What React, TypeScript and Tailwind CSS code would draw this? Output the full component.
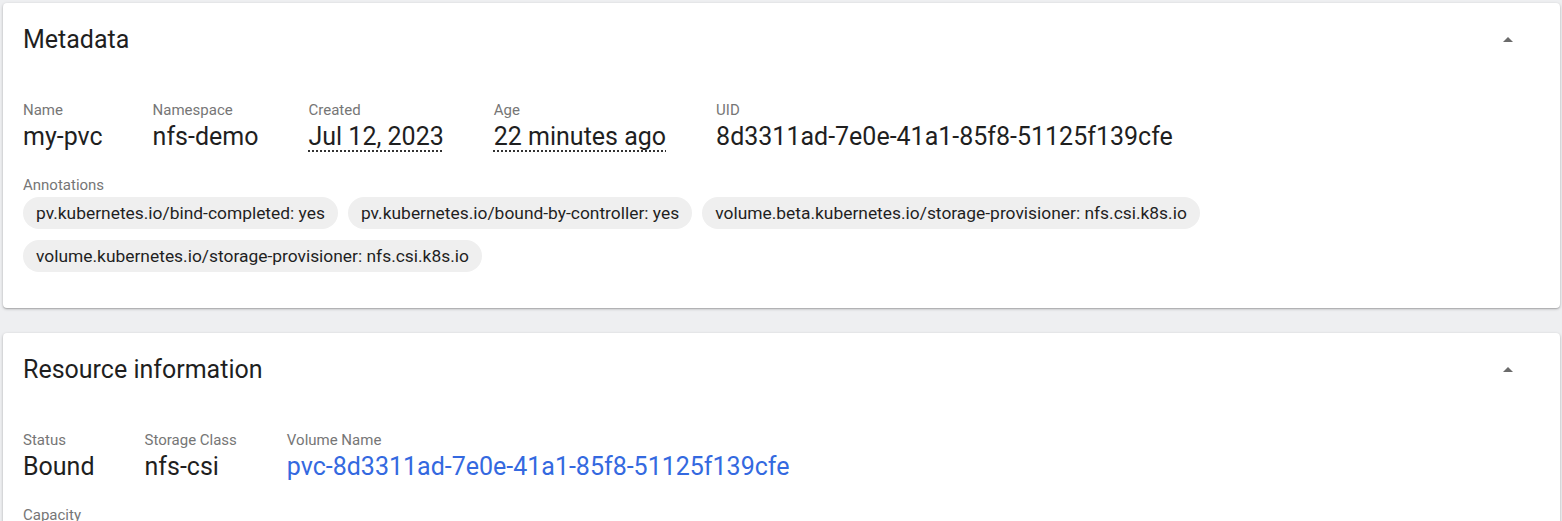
import React from "react";

function ArrowUp() {
  return (
    <svg width="24" height="24" viewBox="0 0 24 24" className="block">
      <path d="M7 14l5-5 5 5z" fill="#6b6b6b" />
    </svg>
  );
}

function Field({ label, children }: { label: string; children: React.ReactNode }) {
  return (
    <div className="flex flex-col">
      <div className="text-[15px] leading-[20px] text-[#767676]">{label}</div>
      <div className="mt-[2px] text-[25px] leading-[30px] text-[#1f1f1f]">{children}</div>
    </div>
  );
}

function Card({ title, children }: { title: string; children: React.ReactNode }) {
  return (
    <div className="rounded-[4px] bg-white shadow-[0_1px_3px_rgba(0,0,0,0.25),0_1px_1px_rgba(0,0,0,0.12)] px-5 pt-[21px]">
      <div className="flex items-center justify-between">
        <h2 className="text-[25px] leading-[32px] text-[#1f1f1f]">{title}</h2>
        <div className="mr-[20px]">
          <ArrowUp />
        </div>
      </div>
      {children}
    </div>
  );
}

function Chip({ children }: { children: React.ReactNode }) {
  return (
    <span className="inline-flex h-8 items-center rounded-full bg-[#efefef] px-[13px] text-[17.4px] text-[#1f1f1f]">
      {children}
    </span>
  );
}

function Dotted({ children }: { children: React.ReactNode }) {
  return (
    <span className="underline decoration-dotted decoration-[2px] underline-offset-[5px] decoration-[#333]">
      {children}
    </span>
  );
}

export default function App() {
  return (
    <div
      className="h-[521px] overflow-hidden bg-[#eeeff1] pl-[3px] pr-[2px] pt-[3px]"
      style={{ fontFamily: "Roboto, 'Noto Sans', sans-serif" }}
    >
      <Card title="Metadata">
        <div className="mt-[44px] flex gap-[50px]">
          <Field label="Name">my-pvc</Field>
          <Field label="Namespace">nfs-demo</Field>
          <Field label="Created">
            <Dotted>Jul 12, 2023</Dotted>
          </Field>
          <Field label="Age">
            <Dotted>22 minutes ago</Dotted>
          </Field>
          <Field label="UID">8d3311ad-7e0e-41a1-85f8-51125f139cfe</Field>
        </div>
        <div className="mt-[23px] text-[15px] leading-[20px] text-[#767676]">Annotations</div>
        <div className="mt-[2px] flex flex-wrap gap-x-[10px] gap-y-[11px] pb-[36px]">
          <Chip>pv.kubernetes.io/bind-completed: yes</Chip>
          <Chip>pv.kubernetes.io/bound-by-controller: yes</Chip>
          <Chip>volume.beta.kubernetes.io/storage-provisioner: nfs.csi.k8s.io</Chip>
          <Chip>volume.kubernetes.io/storage-provisioner: nfs.csi.k8s.io</Chip>
        </div>
      </Card>
      <div className="h-[25px]" />
      <Card title="Resource information">
        <div className="mt-[44px] flex gap-[50px]">
          <Field label="Status">Bound</Field>
          <Field label="Storage Class">nfs-csi</Field>
          <Field label="Volume Name">
            <span className="text-[#3469e0]">pvc-8d3311ad-7e0e-41a1-85f8-51125f139cfe</span>
          </Field>
        </div>
        <div className="mt-[23px] text-[15px] leading-[20px] text-[#767676]">Capacity</div>
        <div className="mt-[2px] text-[25px] leading-[30px] text-[#1f1f1f]">1Gi</div>
        <div className="h-10" />
      </Card>
    </div>
  );
}
